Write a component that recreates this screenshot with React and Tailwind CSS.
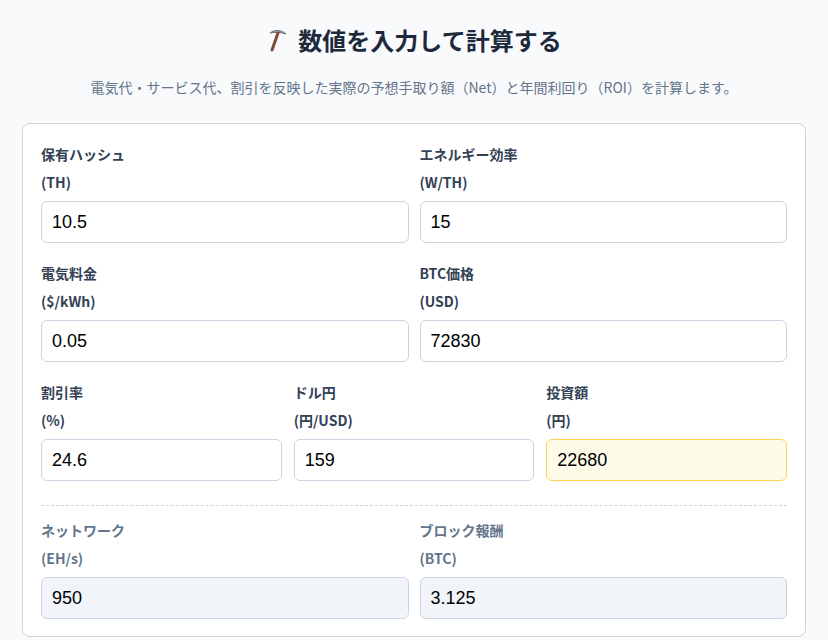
import React from 'react';

const jp = { fontFamily: '"Noto Sans CJK JP", "Noto Sans", sans-serif' };
const num = { fontFamily: '"Liberation Sans", Arial, sans-serif' };

function Pick() {
  return (
    <svg width="24" height="24" viewBox="0 0 24 24" className="mr-2">
      <path d="M4 5 C9 1 16 2 20 6 C15 4 9 4 4 5Z" fill="#9ca3af" stroke="#6b7280" strokeWidth="1" />
      <path d="M12 5 L6 22" stroke="#7c4a3a" strokeWidth="3" strokeLinecap="round" />
    </svg>
  );
}

function Field({ label, unit, value, variant, muted }) {
  const box =
    variant === 'yellow'
      ? 'bg-[#fefce8] border-[#fcd34d]'
      : variant === 'gray'
      ? 'bg-[#f1f5f9] border-[#cbd5e1]'
      : 'bg-white border-[#cbd5e1]';
  return (
    <div className="flex flex-col">
      <div className={`text-sm font-bold leading-[28px] ${muted ? 'text-[#64748b]' : 'text-[#334155]'}`} style={jp}>{label}</div>
      <div className={`text-sm font-bold leading-[28px] mb-[5px] ${muted ? 'text-[#64748b]' : 'text-[#334155]'}`} style={jp}>{unit}</div>
      <div className={`h-[42px] border rounded-md px-[10px] flex items-center text-[18px] text-black ${box}`} style={num}>
        {value}
      </div>
    </div>
  );
}

export default function App() {
  return (
    <div className="min-h-[640px] bg-[#f8fafc] px-[22px] pt-[22px]" style={jp}>
      <h1 className="flex items-center justify-center text-[24px] font-bold text-[#1e293b] leading-[36px]">
        <Pick />
        数値を入力して計算する
      </h1>
      <p className="text-center text-[14px] text-[#64748b] mt-[18px] leading-[22px]">
        電気代・サービス代、割引を反映した実際の予想手取り額（Net）と年間利回り（ROI）を計算します。
      </p>
      <div className="mt-[25px] bg-white border border-[#d1d5db] rounded-lg px-[18px] pt-4 pb-[17px]">
        <div className="grid grid-cols-2 gap-x-[11px] gap-y-4">
          <Field label="保有ハッシュ" unit="(TH)" value="10.5" />
          <Field label="エネルギー効率" unit="(W/TH)" value="15" />
          <Field label="電気料金" unit="($/kWh)" value="0.05" />
          <Field label="BTC価格" unit="(USD)" value="72830" />
        </div>
        <div className="grid grid-cols-3 gap-x-3 mt-4">
          <Field label="割引率" unit="(%)" value="24.6" />
          <Field label="ドル円" unit="(円/USD)" value="159" />
          <Field label="投資額" unit="(円)" value="22680" variant="yellow" />
        </div>
        <div className="border-t border-dashed border-[#d1d5db] mt-6 mb-[10px]" />
        <div className="grid grid-cols-2 gap-x-[11px]">
          <Field label="ネットワーク" unit="(EH/s)" value="950" variant="gray" muted />
          <Field label="ブロック報酬" unit="(BTC)" value="3.125" variant="gray" muted />
        </div>
      </div>
    </div>
  );
}
